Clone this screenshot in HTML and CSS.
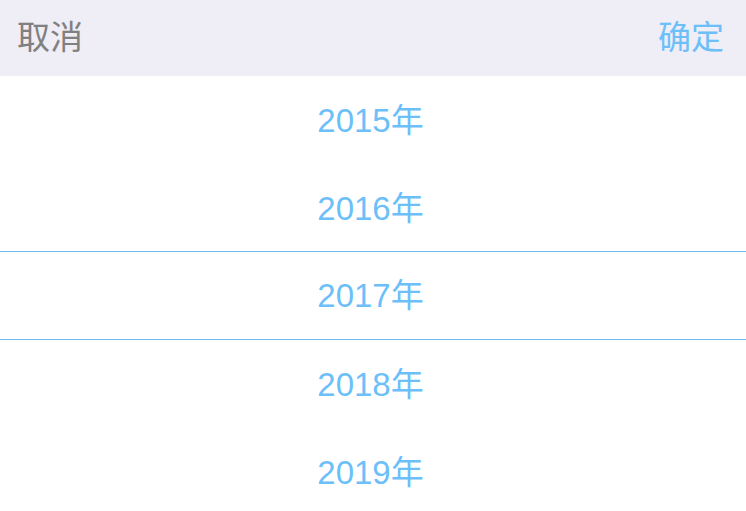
FILE: index.html
```html
<!DOCTYPE html>
<html lang="zh-CN">
<head>
  <meta charset="UTF-8">
  <meta name="viewport" content="width=device-width, initial-scale=1">
  <title>选择年份</title>
  <link rel="stylesheet" href="styles.css">
</head>
<body>
  <div class="picker">
    <!-- 顶部操作栏 -->
    <div class="picker-bar">
      <span class="bar-btn cancel">取消</span>
      <span class="bar-btn confirm">确定</span>
    </div>
    <!-- 年份列表 -->
    <div class="picker-list">
      <div class="picker-item">2015年</div>
      <div class="picker-item">2016年</div>
      <div class="picker-item selected">2017年</div>
      <div class="picker-item">2018年</div>
      <div class="picker-item">2019年</div>
    </div>
  </div>
</body>
</html>
```
FILE: styles.css
```css
/* 基础 */
body {
  margin: 0;
  background: #fff;
  font-family: "Liberation Sans", "Noto Sans CJK SC", sans-serif;
}
.picker {
  width: 100%;
  overflow: hidden;
}
/* 顶部操作栏 */
.picker-bar {
  height: 76px;
  background: #efedf6;
  display: flex;
  justify-content: space-between;
  align-items: center;
  padding: 0 22px 5px 17px;
  box-sizing: border-box;
}
.bar-btn {
  font-family: "Noto Sans CJK SC", sans-serif;
  font-size: 33px;
  line-height: 1;
}
.cancel {
  color: #808080;
}
.confirm {
  color: #6cbff8;
}
/* 年份列表 */
.picker-item {
  height: 88px;
  display: flex;
  justify-content: center;
  align-items: center;
  padding: 0 5px 5px 0;
  font-size: 33px;
  color: #6cbff8;
  box-sizing: border-box;
}
.picker-item.selected {
  border-top: 1px solid #6bb8f2;
  border-bottom: 1px solid #6bb8f2;
  margin-top: -1px;
  height: 89px;
}
```
